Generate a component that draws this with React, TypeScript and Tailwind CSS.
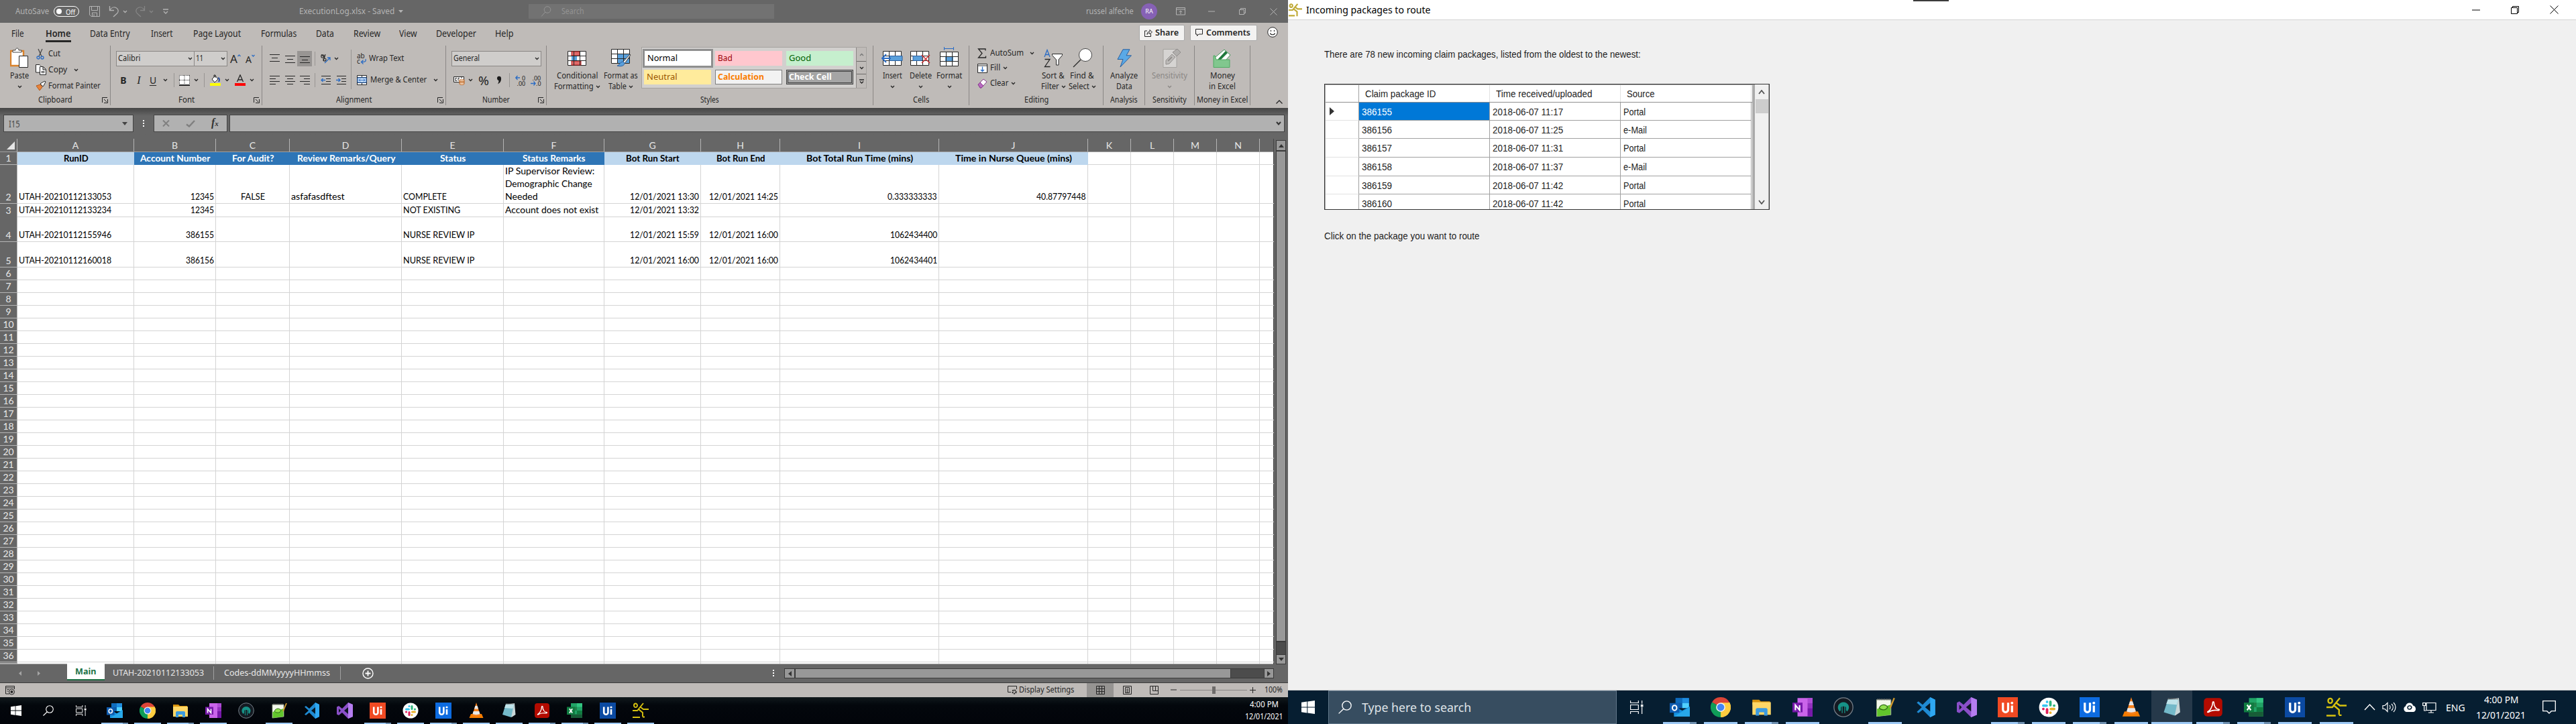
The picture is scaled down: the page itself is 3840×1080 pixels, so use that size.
import { useLayoutEffect, useRef, type ReactNode } from "react";

/** A single line of text condensed or widened to an exact advance width. */
function Fit({ w, children, className = "" }: { w: number; children: string; className?: string }) {
  const ref = useRef<HTMLSpanElement>(null);
  useLayoutEffect(() => {
    const el = ref.current;
    if (!el) return;
    const box = el.parentElement as HTMLElement;
    box.style.width = `${w}px`;
    el.style.transform = `scaleX(${w / el.offsetWidth})`;
  }, [w, children]);
  return (
    <span className={`inline-block shrink-0 whitespace-nowrap ${className}`}>
      <span ref={ref} className="inline-block origin-left">{children}</span>
    </span>
  );
}

function Svg({ w, h, vb, children, className = "" }: { w: number; h: number; vb?: string; children: ReactNode; className?: string }) {
  return (
    <svg width={w} height={h} viewBox={vb ?? `0 0 ${w} ${h}`} fill="none" className={`shrink-0 ${className}`}>
      {children}
    </svg>
  );
}

const Chev = ({ c = "#262626" }: { c?: string }) => (
  <Svg w={7} h={5}><path d="M1 1l2.5 2.5L6 1" stroke={c} strokeWidth="1.3" /></Svg>
);

const Slot = ({ className = "", children }: { className?: string; children?: ReactNode }) => (
  <div className={`flex shrink-0 items-center justify-center ${className}`}>{children}</div>
);

const Sep = () => <div className="h-[21px] w-px bg-[#989593]" />;

/* ---------- Title bar ---------- */
function TitleBar() {
  return (
    <div className="flex h-[34px] items-center bg-[#666666] text-[12.5px] text-[#b4b4b4]">
      <div className="flex w-[80px] pl-[23px]"><Fit w={50}>AutoSave</Fit></div>
      <div className="flex h-[16px] w-[38px] items-center rounded-full border-[1.5px] border-white pl-[3px] text-white">
        <div className="mr-[6px] size-[8px] rounded-full bg-white" />
        <Fit w={14} className="text-[11px] leading-none">Off</Fit>
      </div>
      <Svg w={16} h={16} className="ml-[15px]">
        <path d="M.5.5h15v15H3l-2.500-2.500zM3.500.5v6h9v-6M4.500 15v-5h7v5M7 12v3" stroke="#b4b4b4" />
      </Svg>
      <Svg w={16} h={18} className="ml-[13px]">
        <path d="M1.500 1v6.500H8M1.500 7.500C4 3 8 2 11 3.500c4 2 4 6 1.500 8.500L7 17" stroke="#b4b4b4" strokeWidth="1.300" />
      </Svg>
      <Slot className="ml-1 w-[8px]"><Chev c="#b4b4b4" /></Slot>
      <Svg w={16} h={18} className="ml-[11px]">
        <path d="M14.500 1v6.500H8M14.500 7.500C12 3 8 2 5 3.500c-4 2-4 6-1.500 8.500L9 17" stroke="#868686" strokeWidth="1.300" />
      </Svg>
      <Slot className="ml-1 w-[8px]"><Chev c="#868686" /></Slot>
      <Svg w={8} h={8} className="ml-[14px]"><path d="M0 1h8M1 4l3 3 3-3" stroke="#b4b4b4" strokeWidth="1.300" /></Svg>
      <div className="ml-[195px] flex w-[342px] items-center gap-[6px]">
        <Fit w={142}>ExecutionLog.xlsx - Saved</Fit>
        <Svg w={7} h={4}><path d="M0 0h7L3.500 4z" fill="#b4b4b4" /></Svg>
      </div>
      <div className="flex h-[22px] w-[366px] items-center bg-[#727272] pl-[18px] text-[#949494]">
        <Svg w={16} h={16}><circle cx="10" cy="5.500" r="4.800" stroke="#949494" /><path d="M6.800 9L1 15.500" stroke="#949494" /></Svg>
        <Fit w={34} className="ml-[15px]">Search</Fit>
      </div>
      <div className="ml-[465px] flex"><Fit w={71}>russel alfeche</Fit></div>
      <div className="ml-[11px] flex size-[24px] items-center justify-center rounded-full bg-[#8661b5] text-[9px] text-white">RA</div>
      <Svg w={14} h={12} className="ml-[28px]"><path d="M.5.5h13v10.500H.5zM.5 3h13M7 10V5M4.800 7L7 5l2.200 2" stroke="#b4b4b4" /></Svg>
      <Svg w={10} h={2} className="ml-[34px]"><path d="M0 1h10" stroke="#b4b4b4" /></Svg>
      <Svg w={10} h={10} className="ml-[36px]"><path d="M.5 2.500h7v7h-7zM2.500 2.500v-2h7v7h-2" stroke="#b4b4b4" /></Svg>
      <Svg w={11} h={11} className="ml-[36px]"><path d="M.5.5l10 10M10.500.5l-10 10" stroke="#b4b4b4" /></Svg>
    </div>
  );
}

/* ---------- Ribbon ---------- */
function RibbonTabs() {
  return (
    <div className="flex h-[34px] items-start">
      <div className="grid h-[32px] w-[1698px] grid-cols-[51px_66px_91px_63px_101px_82px_56px_68px_55px_88px_60px] items-center pl-[17px] text-[13.5px]">
        <Fit w={19}>File</Fit>
        <div className="flex h-[24px] w-[38px] translate-y-[1px] items-center border-b-[3px] border-[#262626] pt-[1px]">
          <Fit w={37} className="font-semibold">Home</Fit>
        </div>
        <Fit w={60}>Data Entry</Fit>
        <Fit w={32}>Insert</Fit>
        <Fit w={71}>Page Layout</Fit>
        <Fit w={53}>Formulas</Fit>
        <Fit w={27}>Data</Fit>
        <Fit w={40}>Review</Fit>
        <Fit w={27}>View</Fit>
        <Fit w={60}>Developer</Fit>
        <Fit w={27}>Help</Fit>
      </div>
      <div className="mt-[3px] flex h-[24px] w-[68px] items-center rounded-[2px] border border-[#aaa] bg-[#f3f2f1] pl-[7px] text-[13px] font-semibold">
        <Svg w={12} h={12}><path d="M4 3H.5v8.500h9V8M4 8.500C4 5 6 4 8 4V1.500L11.500 5 8 8V6C6 6 5 6.500 4 8.500z" stroke="#262626" /></Svg>
        <Fit w={35} className="ml-[4px]">Share</Fit>
      </div>
      <div className="mt-[3px] ml-[8px] flex h-[24px] w-[100px] items-center rounded-[2px] border border-[#aaa] bg-[#f3f2f1] pl-[7px] text-[13px] font-semibold">
        <Svg w={11} h={12}><path d="M.5.500h10v7.500H5L2.500 10.500V8h-2z" stroke="#262626" /></Svg>
        <Fit w={66} className="ml-[5px]">Comments</Fit>
      </div>
      <Svg w={16} h={16} className="mt-[6px] ml-[15px]">
        <circle cx="8" cy="8" r="7.300" fill="#fff" stroke="#262626" />
        <path d="M4.500 9.500c1 3 6 3 7 0M5.500 5v2M10.500 5v2" stroke="#262626" strokeWidth="1.200" />
      </Svg>
    </div>
  );
}

function Group({ label, lw, className, dlg, children }: { label: string; lw: number; className: string; dlg?: boolean; children: ReactNode }) {
  return (
    <div className={`flex h-[89px] shrink-0 flex-col border-r border-[#8a8785] ${className}`}>
      <div className="flex h-[75px]">{children}</div>
      <div className="grid h-[16px] grid-cols-[1fr_auto_1fr] items-center text-[12px] leading-none">
        <span />
        <Fit w={lw}>{label}</Fit>
        {dlg ? <Svg w={9} h={9} className="mr-[3px] justify-self-end"><path d="M.5 8V.5H8M3 3l4 4M8.500 3v5.500H3" stroke="#262626" /></Svg> : <span />}
      </div>
    </div>
  );
}

const Line2 = ({ children }: { children: ReactNode }) => <div className="flex h-[16px] items-center justify-center gap-[3px]">{children}</div>;

function Big({ icon, a, aw, b, bw, chev, className, dim }: { icon: ReactNode; a: string; aw: number; b?: string; bw?: number; chev?: boolean; className: string; dim?: boolean }) {
  return (
    <div className={`flex shrink-0 flex-col ${dim ? "text-[#8a8785]" : ""} ${className}`}>
      <div className="flex h-[37px] items-center justify-center">{icon}</div>
      <Line2><Fit w={aw}>{a}</Fit></Line2>
      <Line2>{b && <Fit w={bw ?? 30}>{b}</Fit>}{chev && <Chev c={dim ? "#8a8785" : "#262626"} />}</Line2>
    </div>
  );
}

const Lines = ({ d }: { d: string }) => <Svg w={15} h={15}><path d={d} stroke="#262626" strokeWidth="1.200" /></Svg>;

function Combo({ v, vw, className }: { v: string; vw: number; className: string }) {
  return (
    <div className={`flex h-[23px] items-center justify-between border border-[#8a8785] bg-[#cfcdcb] pr-[2px] pl-[2px] ${className}`}>
      <Fit w={vw}>{v}</Fit><Chev />
    </div>
  );
}

const GridBase = ({ children }: { children?: ReactNode }) => (
  <>
    <path d="M.5.5h27v21H.5z" fill="#fff" stroke="#262626" />
    {children}
    <path d="M.5 7.500h27M.5 14.500h27M9.500.5v21M18.500.5v21" stroke="#262626" />
  </>
);

function Ribbon() {
  return (
    <div className="h-[127px] bg-[#bfbbb8] text-[12.5px] text-[#262626]">
      <RibbonTabs />
      <div className="flex">
        <Group label="Clipboard" lw={51} className="w-[165px]" dlg>
          <Big className="w-[53px] pl-[5px]" a="Paste" aw={28} chev icon={
            <Svg w={28} h={31}>
              <path d="M1 5h19v22H1z" fill="#fff" stroke="#d9822b" strokeWidth="2.400" />
              <path d="M4 7V4h4c0-4 5-4 5 0h4v3z" fill="#fff" stroke="#444" />
              <path d="M13.500 12.500h13v17h-13z" fill="#fff" stroke="#262626" />
            </Svg>} />
          <div className="flex flex-col">
            <div className="flex h-[24px] items-center gap-[4px]">
              <Svg w={15} h={17}><path d="M4 1l5 11M10 1L5 12" stroke="#444" strokeWidth="1.200" /><circle cx="4" cy="14" r="2" stroke="#2b6cc4" strokeWidth="1.300" /><circle cx="10" cy="14" r="2" stroke="#2b6cc4" strokeWidth="1.300" /></Svg>
              <Fit w={18}>Cut</Fit>
            </div>
            <div className="flex h-[24px] items-center gap-[3px]">
              <Svg w={16} h={16}><path d="M6 12H.5V.5H6l2 2" fill="#fff" stroke="#262626" /><path d="M6.500 3.500h5l4 4v8h-9zM11 4v4h4M8.500 10.500h5M8.500 12.500h5" fill="#fff" stroke="#262626" /></Svg>
              <Fit w={28}>Copy</Fit><Slot className="w-[20px]"><Chev /></Slot>
            </div>
            <div className="flex h-[24px] items-center gap-[3px]">
              <Svg w={16} h={16}><path d="M1 8l6-2 3 4-4 5z" fill="#e8833a" stroke="#b45a1c" /><path d="M7 5l4 4 1.500-2L15 2l-1-1-4 2z" fill="#fff" stroke="#262626" /></Svg>
              <Fit w={78}>Format Painter</Fit>
            </div>
          </div>
        </Group>

        <Group label="Font" lw={24} className="w-[226px]" dlg>
          <div className="flex flex-col pt-[8px] pl-[8px]">
            <div className="flex h-[23px] items-center">
              <Combo v="Calibri" vw={33} className="w-[117px]" />
              <Combo v="11" vw={11} className="-ml-px w-[50px]" />
              <Slot className="w-[24px]"><Fit w={11} className="text-[17px] leading-none">A</Fit><Svg w={5} h={14}><path d="M.5 3l2-2 2 2" stroke="#2b6cc4" strokeWidth="1.300" /></Svg></Slot>
              <Slot className="w-[20px]"><Fit w={9} className="mt-[2px] text-[14px] leading-none">A</Fit><Svg w={5} h={14}><path d="M.5 1l2 2 2-2" stroke="#2b6cc4" strokeWidth="1.300" /></Svg></Slot>
            </div>
            <div className="mt-[10px] flex h-[21px] items-center text-[14px]">
              <Slot className="w-[22px] font-bold">B</Slot>
              <Slot className="w-[24px] font-['Liberation_Serif'] text-[16px] italic">I</Slot>
              <Slot className="w-[18px] underline underline-offset-2">U</Slot>
              <Slot className="w-[18px]"><Chev /></Slot>
              <Slot className="w-[8px]"><Sep /></Slot>
              <Slot className="w-[24px]"><Svg w={16} h={16}><path d="M0 0h16v15H0z" fill="#fff" /><path d="M.5 0v15M15.500 0v15M8 0v15M0 .5h16M0 7.500h16" stroke="#262626" strokeDasharray="1 1" /><path d="M0 15h16" stroke="#262626" strokeWidth="2" /></Svg></Slot>
              <Slot className="w-[10px]"><Chev /></Slot>
              <Slot className="w-[14px]"><Sep /></Slot>
              <Slot className="w-[20px]"><Svg w={16} h={17}><path d="M3 7l5-5 4 5-5 5z" fill="#fff" stroke="#262626" /><path d="M6 4V1h2v4" stroke="#262626" /><path d="M12 5c3 1 2 4 1 6" stroke="#2b4f9e" strokeWidth="2" /><path d="M0 13h16v4H0z" fill="#ffff00" /></Svg></Slot>
              <Slot className="w-[14px]"><Chev /></Slot>
              <Slot className="w-[26px]"><Svg w={16} h={17}><path d="M3.500 11L8 .8 12.500 11M5 8h6" stroke="#262626" strokeWidth="1.300" /><path d="M0 13h16v4H0z" fill="#ff0000" /></Svg></Slot>
              <Slot className="w-[9px]"><Chev /></Slot>
            </div>
          </div>
        </Group>

        <Group label="Alignment" lw={53} className="w-[274px]" dlg>
          <div className="flex w-[132px] flex-col pt-[8px] pl-[7px]">
            <div className="flex h-[23px] items-center">
              <Slot className="w-[23px]"><Lines d="M0 1.500h15M3 6.500h9M0 11.500h15" /></Slot>
              <Slot className="w-[22px]"><Lines d="M0 3.500h15M3 8.500h9M0 13.500h15" /></Slot>
              <Slot className="h-[23px] w-[22px] bg-[#989593]"><Lines d="M0 4.500h15M3 9.500h9M0 13.500h15" /></Slot>
              <Slot className="w-[9px]"><Sep /></Slot>
              <Slot className="w-[22px]"><Svg w={17} h={16}><g stroke="#262626" strokeWidth="1.100"><circle cx="4" cy="4" r="2.200" /><path d="M2 1.500l5 4" /><circle cx="8" cy="8" r="2" transform="translate(-1 1)" /><path d="M5 11l3-10" /></g><path d="M7 14l8-8M11 6h4v4" stroke="#2b6cc4" strokeWidth="1.300" /></Svg></Slot>
              <Slot className="w-[10px]"><Chev /></Slot>
            </div>
            <div className="mt-[10px] flex h-[21px] items-center">
              <Slot className="w-[23px]"><Lines d="M0 1.500h15M0 5.500h9M0 9.500h15M0 13.500h9" /></Slot>
              <Slot className="w-[22px]"><Lines d="M0 1.500h15M3 5.500h9M0 9.500h15M3 13.500h9" /></Slot>
              <Slot className="w-[22px]"><Lines d="M0 1.500h15M6 5.500h9M0 9.500h15M6 13.500h9" /></Slot>
              <Slot className="w-[9px]"><Sep /></Slot>
              <Slot className="w-[23px]"><Svg w={15} h={15}><path d="M1 1.500h14M8 5.500h7M8 9.500h7M1 13.500h14" stroke="#262626" strokeWidth="1.200" /><path d="M7 7.500H1M3.500 5L1 7.500 3.500 10" stroke="#2b6cc4" strokeWidth="1.300" /></Svg></Slot>
              <Slot className="w-[22px]"><Svg w={15} h={15}><path d="M1 1.500h14M8 5.500h7M8 9.500h7M1 13.500h14" stroke="#262626" strokeWidth="1.200" /><path d="M0 7.500h6M3.500 5L6 7.500 3.500 10" stroke="#2b6cc4" strokeWidth="1.300" /></Svg></Slot>
            </div>
          </div>
          <div className="mt-[6px] h-[59px] w-px bg-[#989593]" />
          <div className="flex flex-col pt-[8px] pl-[8px]">
            <div className="flex h-[23px] items-center">
              <Svg w={18} h={23} vb="0 -3 18 23"><text x="0" y="8" fontSize="10" fill="#262626">ab</text><text x="0" y="16" fontSize="10" fill="#262626">c</text><path d="M13 9c1 4-1 4.500-6 4.500M9.500 10.500l-3 3 3 3" stroke="#2b6cc4" strokeWidth="1.300" /></Svg>
              <Fit w={52}>Wrap Text</Fit>
            </div>
            <div className="mt-[10px] flex h-[21px] items-center">
              <Svg w={15} h={15} className="mr-[5px]"><path d="M.5.5h14v14H.5zM.5 3.500h14M.5 11.500h14M7.500.5v3M7.500 11.500v3" fill="#fff" stroke="#262626" /><path d="M1 4h13v7H1z" fill="#cfe3f7" stroke="#2b6cc4" /><path d="M3 7.500h9M5 5.500l-2 2 2 2M10 5.500l2 2-2 2" stroke="#2b6cc4" /></Svg>
              <Fit w={84}>Merge & Center</Fit><Slot className="w-[26px]"><Chev /></Slot>
            </div>
          </div>
        </Group>

        <Group label="Number" lw={41} className="w-[150px]" dlg>
          <div className="flex flex-col pt-[8px] pl-[8px]">
            <Combo v="General" vw={39} className="w-[134px]" />
            <div className="mt-[10px] flex h-[21px] items-center">
              <Slot className="w-[22px]"><Svg w={17} h={15}><path d="M.5 2.500h15v8H.5z" fill="#fff" stroke="#262626" /><path d="M5 4.500H3v4h2M9 4.500H7v4M11 4h2" stroke="#262626" /><path d="M9 7h7v6c0 2-7 2-7 0z" fill="#f5d9bf" stroke="#b8601c" /><path d="M9 9.500h7M9 11.500h7" stroke="#b8601c" /></Svg></Slot>
              <Slot className="w-[12px]"><Chev /></Slot>
              <Slot className="w-[28px]"><Fit w={16} className="text-[18px] leading-none">%</Fit></Slot>
              <Slot className="w-[17px]"><Svg w={8} h={13}><path d="M1 4a3 3 0 016-.5C7.500 8 5 11 2 12.500c1-2 1.500-3.500 1.500-5.500C2 7 1 5.500 1 4z" fill="#1a1a1a" /></Svg></Slot>
              <Slot className="w-[14px]"><Sep /></Slot>
              <Slot className="w-[22px]"><Svg w={20} h={24} vb="-1 -4 20 24"><path d="M7 4H.8M3.500 1L.8 4l2.700 3" stroke="#2b6cc4" strokeWidth="1.300" /><text x="10" y="7.500" fontSize="9" fill="#262626">0</text><text x="2.500" y="16" fontSize="9" fill="#262626">.00</text></Svg></Slot>
              <Slot className="w-[24px]"><Svg w={20} h={24} vb="-1 -4 20 24"><path d="M0 12.500h7M4.500 9.500l2.500 3-2.500 3" stroke="#2b6cc4" strokeWidth="1.300" /><text x="2.500" y="7.500" fontSize="9" fill="#262626">.00</text><text x="8" y="16" fontSize="9" fill="#262626">.0</text></Svg></Slot>
            </div>
          </div>
        </Group>

        <Group label="Styles" lw={28} className="w-[487px]">
          <Big className="ml-[10px] w-[70px]" a="Conditional" aw={61} b="Formatting" bw={59} chev icon={
            <Svg w={28} h={22}><GridBase><path d="M6 1h12v6H6zM6 15h14v6H6z" fill="#de6a6a" stroke="#b01e1e" /><path d="M6 8h8v6H6z" fill="#5aa0dc" /></GridBase></Svg>} />
          <Big className="w-[61px]" a="Format as" aw={51} b="Table" bw={27} chev icon={
            <Svg w={30} h={27}><GridBase><path d="M9 8h18v13H9z" fill="#5aa0dc" /></GridBase><path d="M28 8l1 1-9 13-3-2z" fill="#eee" stroke="#444" /><path d="M18 19l2 2c0 4-5 6-11 4 3 0 4-6 9-6z" fill="#5aa0dc" stroke="#2b5f9e" /></Svg>} />
          <div className="mt-[2px] flex h-[62px] w-[336px] border border-[#a5a29f] bg-[#d2d0ce] text-[13px]">
            <div className="grid w-[319px] grid-cols-[106px_106px_106px] grid-rows-[30px_30px]">
              <div className="mt-[2px] ml-px flex h-[28px] items-center border-[3px] border-[#8f8f8f] bg-white pl-[4px] text-black"><Fit w={45}>Normal</Fit></div>
              <div className="mt-[5px] ml-[3px] flex h-[22px] w-[100px] items-center bg-[#ffc7ce] pl-[4px] text-[#9c0006]"><Fit w={22}>Bad</Fit></div>
              <div className="mt-[5px] ml-[3px] flex h-[22px] w-[100px] items-center bg-[#c6efce] pl-[4px] text-[#006100]"><Fit w={33}>Good</Fit></div>
              <div className="mt-[3px] ml-[3px] flex h-[22px] w-[100px] items-center bg-[#ffeb9c] pl-[4px] text-[#9c5700]"><Fit w={46}>Neutral</Fit></div>
              <div className="mt-[3px] ml-[3px] flex h-[22px] w-[100px] items-center border border-[#7f7f7f] bg-[#f2f2f2] pl-[3px] font-bold text-[#fa7d00]"><Fit w={69}>Calculation</Fit></div>
              <div className="mt-[3px] ml-[3px] flex h-[22px] w-[100px] items-center border-[3px] border-double border-[#3f3f3f] bg-[#a5a5a5] pl-[1px] font-bold text-white"><Fit w={64}>Check Cell</Fit></div>
            </div>
            <div className="flex w-[15px] flex-col border-l border-[#8a8785] bg-[#bfbbb8]">
              <Slot className="h-[20px]"><Svg w={7} h={5}><path d="M1 4l2.500-2.500L6 4" stroke="#777" strokeWidth="1.300" /></Svg></Slot>
              <Slot className="h-[20px] border-y border-[#6d6a68]"><Chev /></Slot>
              <Slot className="h-[20px]"><Svg w={7} h={7}><path d="M0 1h7M1 3.500L3.500 6 6 3.500" stroke="#262626" strokeWidth="1.300" /></Svg></Slot>
            </div>
          </div>
        </Group>

        <Group label="Cells" lw={24} className="w-[143px]">
          <Big className="ml-[7px] w-[42px]" a="Insert" aw={29} chev icon={
            <Svg w={32} h={22}><g transform="translate(2 0)"><GridBase /></g><path d="M12 7.500h19v7H12z" fill="#5aa0dc" stroke="#2b5f9e" /><path d="M14 11H1M7 5l-6 6 6 6" stroke="#2b6cc4" strokeWidth="2" /></Svg>} />
          <Big className="w-[42px]" a="Delete" aw={33} chev icon={
            <Svg w={30} h={22}><GridBase /><path d="M4 7.500h13v7H4z" fill="#5aa0dc" stroke="#2b5f9e" /><path d="M17 6l12 12M29 6L17 18" stroke="#d13438" strokeWidth="1.500" /></Svg>} />
          <Big className="w-[44px]" a="Format" aw={38} chev icon={
            <Svg w={28} h={31} className="-mt-[5px]"><path d="M6 3.500h15M6.500 1v5M20.500 1v5" stroke="#2b6cc4" /><g transform="translate(0 8)"><GridBase><path d="M8 8h12v6H8z" fill="#5aa0dc" /></GridBase></g></Svg>} />
        </Group>

        <Group label="Editing" lw={36} className="w-[200px]">
          <div className="ml-[12px] flex w-[92px] flex-col">
            <div className="flex h-[22px] items-center gap-[5px]">
              <Svg w={14} h={15}><path d="M12 3.500V1H1.500l5.500 6.500L1.500 14H12.500v-2.500" stroke="#262626" strokeWidth="1.300" /></Svg>
              <Fit w={50}>AutoSum</Fit><Slot className="w-[14px]"><Chev /></Slot>
            </div>
            <div className="flex h-[23px] items-center gap-[4px]">
              <Svg w={15} h={14}><path d="M.5.500h14v13H.5zM.5 3h14" fill="#fff" stroke="#262626" /><path d="M7.500 4.500v7M5 9l2.500 2.500L10 9" stroke="#2b6cc4" strokeWidth="1.300" /></Svg>
              <Fit w={15}>Fill</Fit><Chev />
            </div>
            <div className="flex h-[23px] items-center gap-[4px]">
              <Svg w={15} h={15}><path d="M1 9L9 1l5 4-8 9H4z" fill="#fff" stroke="#8a3a8f" /><path d="M1 9l3-3 5 5-3 3H4z" fill="#b86bc0" stroke="#8a3a8f" /></Svg>
              <Fit w={27}>Clear</Fit><Chev />
            </div>
          </div>
          <Big className="w-[42px]" a="Sort &" aw={34} b="Filter" bw={27} chev icon={
            <Svg w={28} h={28}><path d="M1 12L5 1.500 9 12M2.500 8.500h5" stroke="#2b6cc4" strokeWidth="1.300" /><path d="M1.500 15.500H9L1.500 26.500H9.500" stroke="#262626" strokeWidth="1.300" /><path d="M12.500 7.500h15v2l-5.500 6.500v8h-3.500v-8l-6-6.500z" fill="#fff" stroke="#262626" /></Svg>} />
          <Big className="w-[44px]" a="Find &" aw={36} b="Select" bw={31} chev icon={
            <Svg w={29} h={29}><circle cx="19" cy="10" r="9.500" fill="#fff" stroke="#444" /><path d="M12 17L1 28" stroke="#262626" strokeWidth="1.300" /></Svg>} />
        </Group>

        <Group label="Analysis" lw={41} className="w-[62px]">
          <Big className="w-full" a="Analyze" aw={41} b="Data" bw={24} icon={
            <Svg w={22} h={28}><path d="M9 .8h10l-5 9h7.500L5 27l4-11.500H1z" fill="#5aa9e6" stroke="#2b5f9e" /></Svg>} />
        </Group>
        <Group label="Sensitivity" lw={51} className="w-[74px]">
          <Big className="w-full" a="Sensitivity" aw={53} chev dim icon={
            <Svg w={28} h={29} className="translate-x-[3px]"><path d="M1 1.500h20v27H1z" fill="#d6d4d2" stroke="#a5a29f" /><path d="M5 18l9-9 5 4-9 10-5 1z" fill="#bdbbb9" stroke="#908d8b" /><path d="M8 19l6-6" stroke="#908d8b" strokeWidth="2" /><path d="M15 6l7-5 5 5-6 6z" fill="#b0aeac" stroke="#908d8b" /></Svg>} />
        </Group>
        <Group label="Money in Excel" lw={76} className="w-[83px]">
          <Big className="w-full" a="Money" aw={37} b="in Excel" bw={40} icon={
            <Svg w={28} h={28}><path d="M3 13L17 1l9 8-7 8H3z" fill="#fff" stroke="#3f9a58" /><path d="M6 17L19 3l3 3-11 11z" fill="#1f7a3d" /><path d="M1 10h2l2 6h20v11.500H1z" fill="#81c78e" stroke="#4faa63" /></Svg>} />
        </Group>
        <div className="flex flex-1 items-end justify-end pr-[8px]"><Svg w={10} h={6} className="mb-[2px]"><path d="M.5 5.500L5 1l4.500 4.500" stroke="#262626" strokeWidth="1.300" /></Svg></div>
      </div>
    </div>
  );
}

function FormulaBar() {
  return (
    <div className="flex h-[46px] items-start bg-[#666666] bg-linear-to-b from-[#454545] via-[#666666] via-[12px] to-[#666666] to-[12px] pt-[10px] text-[14px]">
      <div className="ml-[5px] flex h-[26px] w-[194px] items-center justify-between border border-[#444] bg-[#b1b1b1] pr-[8px] pl-[7px] text-[#4a4a4a]">
        <Fit w={17}>I15</Fit><Svg w={8} h={5}><path d="M0 0h8L4 5z" fill="#444" /></Svg>
      </div>
      <div className="flex h-[26px] w-[30px] flex-col items-center justify-center gap-[2px]">
        <i className="size-[2px] bg-white" /><i className="size-[2px] bg-white" /><i className="size-[2px] bg-white" />
      </div>
      <div className="flex h-[26px] w-[110px] items-center border border-[#444] bg-[#b1b1b1]">
        <Svg w={11} h={10} className="ml-[12px]"><path d="M1 .5l9 9M10 .5l-9 9" stroke="#808080" strokeWidth="2" /></Svg>
        <Svg w={14} h={11} className="ml-[24px]"><path d="M1 6.500l4 3L13 1" stroke="#808080" strokeWidth="2.500" /></Svg>
        <span className="ml-[24px] pb-[3px] font-['Liberation_Serif'] text-[16px] leading-none font-bold text-[#333] italic">f<span className="text-[11px]">x</span></span>
      </div>
      <div className="ml-[3px] flex h-[26px] w-[1573px] items-center justify-end border border-[#444] bg-[#b1b1b1] pr-[4px]">
        <Svg w={8} h={6}><path d="M1 1l3 3.500L7 1" stroke="#333" strokeWidth="2" /></Svg>
      </div>
    </div>
  );
}

/* ---------- Worksheet ---------- */
const COLS = "grid grid-cols-[26px_174px_122px_110px_167px_152px_150px_144px_118px_237px_222px_64px_64px_64px_64px_21px]";
const LETTERS = ["A", "B", "C", "D", "E", "F", "G", "H", "I", "J", "K", "L", "M", "N", ""];
type Cell = [string, number, ("l" | "r" | "c")?];
const HEAD: Cell[] = [["RunID", 37], ["Account Number", 104], ["For Audit?", 63], ["Review Remarks/Query", 146], ["Status", 38], ["Status Remarks", 94], ["Bot Run Start", 80], ["Bot Run End", 73], ["Bot Total Run Time (mins)", 159], ["Time in Nurse Queue (mins)", 174]];
const DATA: Record<number, Record<number, Cell>> = {
  2: { 0: ["UTAH-20210112133053", 138], 1: ["12345", 35, "r"], 2: ["FALSE", 36, "c"], 3: ["asfafasdftest", 80], 4: ["COMPLETE", 65], 6: ["12/01/2021 13:30", 103, "r"], 7: ["12/01/2021 14:25", 103, "r"], 8: ["0.333333333", 74, "r"], 9: ["40.87797448", 74, "r"] },
  3: { 0: ["UTAH-20210112133234", 138], 1: ["12345", 35, "r"], 4: ["NOT EXISTING", 85], 5: ["Account does not exist", 139], 6: ["12/01/2021 13:32", 103, "r"] },
  4: { 0: ["UTAH-20210112155946", 138], 1: ["386155", 42, "r"], 4: ["NURSE REVIEW IP", 106], 6: ["12/01/2021 15:59", 103, "r"], 7: ["12/01/2021 16:00", 103, "r"], 8: ["1062434400", 70, "r"] },
  5: { 0: ["UTAH-20210112160018", 138], 1: ["386156", 42, "r"], 4: ["NURSE REVIEW IP", 106], 6: ["12/01/2021 16:00", 103, "r"], 7: ["12/01/2021 16:00", 103, "r"], 8: ["1062434401", 70, "r"] },
};
const rowHeight = (r: number) => (r === 2 ? "h-[58px]" : r === 4 || r === 5 ? "h-[38px]" : r === 37 ? "h-[2px]" : "h-[19px]");
const alignOf = { l: "justify-start", r: "justify-end", c: "justify-center" };

function Sheet() {
  return (
    <div className="flex h-[784px] bg-[#666666]">
      <div className="w-[1899px] border-r border-[#444] font-['Lato'] text-[13.5px] leading-[19px] text-black">
        <div className={`${COLS} h-[20px] border-b border-[#a0a0a0] text-[#e6e6e6]`}>
          <div className="flex items-end justify-end border-r border-[#b5b5b5] pr-[3px] pb-[3px]"><Svg w={12} h={12}><path d="M12 0v12H0z" fill="#e6e6e6" /></Svg></div>
          {LETTERS.map((l, i) => <div key={i} className={`text-center text-[14px] ${i < 14 ? "border-r border-[#b5b5b5]" : ""}`}>{l}</div>)}
        </div>
        {Array.from({ length: 37 }, (_, k) => k + 1).map((r) => (
          <div key={r} className={`${COLS} ${rowHeight(r)} bg-white`}>
            <div className="flex items-end justify-center overflow-hidden border-r border-b border-[#b5b5b5] bg-[#666666] text-[14px] leading-[18px] text-[#e6e6e6]">{r < 37 && r}</div>
            {LETTERS.map((_, c) => {
              if (r === 1 && c < 10) {
                const blue = c > 0 && c < 6;
                return <div key={c} className={`flex justify-center font-bold ${blue ? "bg-[#2e75b6] text-white" : "bg-[#bdd7ee]"}`}><Fit w={HEAD[c][1]}>{HEAD[c][0]}</Fit></div>;
              }
              if (r === 2 && c === 5) {
                return (
                  <div key={c} className="flex flex-col items-start border-r border-b border-[#d4d4d4] pl-[2px]">
                    <Fit w={133}>IP Supervisor Review:</Fit><Fit w={130}>Demographic Change</Fit><Fit w={49}>Needed</Fit>
                  </div>
                );
              }
              const d = DATA[r]?.[c];
              return (
                <div key={c} className={`flex items-end border-[#d4d4d4] px-[2px] ${c < 14 ? "border-r" : ""} ${r < 37 ? "border-b" : ""} ${alignOf[d?.[2] ?? "l"]}`}>
                  {d && <Fit w={d[1]}>{d[0]}</Fit>}
                </div>
              );
            })}
          </div>
        ))}
        <div className="h-px bg-[#a0a0a0]" />
      </div>
      <div className="ml-[3px] mt-[2px] flex h-[782px] w-[15px] flex-col border border-[#3a3a3a] bg-[#4c4c4c]">
        <Slot className="h-[14px] bg-[#989898]"><Svg w={8} h={5}><path d="M0 5h8L4 0z" fill="#333" /></Svg></Slot>
        <div className="h-[734px] border-y-2 border-[#3a3a3a] bg-[#989898]" />
        <div className="flex-1" />
        <Slot className="h-[14px] border-t border-[#3a3a3a] bg-[#989898]"><Svg w={8} h={5}><path d="M0 0h8L4 5z" fill="#333" /></Svg></Slot>
      </div>
    </div>
  );
}

function SheetTabs() {
  return (
    <div className="flex h-[28px] items-start border-b border-[#3c3c3c] bg-[#666666] text-[13px] text-[#e6e6e6]">
      <Slot className="h-[26px] w-[60px]"><Svg w={4} h={7}><path d="M4 0v7L0 3.500z" fill="#a5a5a5" /></Svg></Slot>
      <Slot className="-ml-[4px] h-[26px] w-[4px]"><Svg w={4} h={7}><path d="M0 0v7l4-3.500z" fill="#a5a5a5" /></Svg></Slot>
      <div className="-mt-px ml-[40px] flex h-[25px] w-[56px] items-center justify-center border-b-2 border-[#217346] bg-white pr-px font-bold text-[#217346]"><Fit w={31}>Main</Fit></div>
      <div className="mt-[3px] flex h-[20px] w-[163px] items-center border-r border-[#a0a0a0] pl-[12px]"><Fit w={136}>UTAH-20210112133053</Fit></div>
      <div className="mt-[3px] flex h-[20px] w-[189px] items-center border-r border-[#a0a0a0] pl-[15px]"><Fit w={158}>Codes-ddMMyyyyHHmmss</Fit></div>
      <Svg w={17} h={17} className="mt-[5px] ml-[32px]"><circle cx="8.500" cy="8.500" r="7.500" stroke="#fff" strokeWidth="1.400" /><path d="M4.500 8.500h8M8.500 4.500v8" stroke="#fff" strokeWidth="1.800" /></Svg>
      <div className="mt-[8px] ml-[595px] flex w-[2px] flex-col gap-[2px]"><i className="size-[2px] bg-white" /><i className="size-[2px] bg-white" /><i className="size-[2px] bg-white" /></div>
      <div className="mt-[6px] ml-[15px] flex h-[15px] w-[730px] border border-[#3a3a3a] bg-[#4c4c4c]">
        <Slot className="w-[14px] bg-[#989898]"><Svg w={5} h={8}><path d="M5 0v8L0 4z" fill="#333" /></Svg></Slot>
        <div className="w-[651px] border-r border-l-2 border-[#3a3a3a] bg-[#989898]" />
        <div className="flex-1" />
        <Slot className="w-[14px] border-l border-[#3a3a3a] bg-[#989898]"><Svg w={5} h={8}><path d="M0 0v8l5-4z" fill="#333" /></Svg></Slot>
      </div>
    </div>
  );
}

function StatusBar() {
  return (
    <div className="flex h-[21px] items-center bg-[#bfbbb8] text-[12.5px] text-[#262626]">
      <Svg w={15} h={14} className="ml-[8px]"><path d="M6 12H.5V.5h13V5M.5 3h13M2.500 5.500h3M2.500 8h2" stroke="#262626" /><circle cx="9.500" cy="9" r="4" stroke="#262626" /><circle cx="9.500" cy="9" r="2" fill="#262626" /></Svg>
      <Svg w={15} h={14} className="ml-[1479px]"><path d="M5 9.500H.5V.5h13V5" stroke="#262626" /><circle cx="10" cy="9" r="2.600" stroke="#262626" strokeWidth="2" strokeDasharray="2 1" /></Svg>
      <Fit w={82} className="ml-[2px]">Display Settings</Fit>
      <Slot className="ml-[19px] h-[21px] w-[40px] bg-[#969492]"><Svg w={13} h={13}><path d="M.5.500h12v12H.5zM.5 4.500h12M.5 8.500h12M4.500.5v12M8.500.5v12" stroke="#262626" /></Svg></Slot>
      <Slot className="w-[40px]"><Svg w={13} h={13}><path d="M.5.500h12v12H.5zM3.500 2.500h6v8h-6zM5 5h3M5 7h3M5 9h3" stroke="#262626" /></Svg></Slot>
      <Slot className="w-[40px]"><Svg w={13} h={13}><path d="M.5.500h12v12H.5zM4.500.5v7M8.500.5v7h-4M12.500 7.500h-4" stroke="#262626" /></Svg></Slot>
      <Svg w={9} h={9} className="ml-[5px]"><path d="M0 4h9" stroke="#262626" /></Svg>
      <div className="ml-[5px] flex h-[11px] w-[100px] items-center"><div className="h-px w-[48px] bg-[#8a8785]" /><div className="h-[11px] w-[5px] bg-[#6e6c6a]" /><div className="h-px flex-1 bg-[#8a8785]" /></div>
      <Svg w={9} h={9} className="ml-[4px]"><path d="M0 4.500h9M4.500 0v9" stroke="#262626" /></Svg>
      <Fit w={27} className="ml-[13px]">100%</Fit>
    </div>
  );
}

/* ---------- Taskbar icons, all on a 24-unit canvas ---------- */
const Ui = ({ bg }: { bg: string }) => (<><path d="M0 0h24v24H0z" fill={bg} /><path d="M6.200 6.500v8.200a3.100 3.100 0 006.200 0V6.500M17 10v8" stroke="#fff" strokeWidth="2.600" /><circle cx="17" cy="7" r="1.600" fill="#fff" /></>);
const ICONS: Record<string, ReactNode> = {
  outlook: (<><path d="M7 1h16v12H7z" fill="#0a5aa8" /><path d="M7 1h8v6H7z" fill="#0f6cbd" /><path d="M15 1h8v6h-8z" fill="#1f8ee0" /><path d="M15 7h8v6h-8z" fill="#50d0ff" /><path d="M5 11l10 5 9-5v12H5z" fill="#1490df" /><path d="M5 23l19-11v11z" fill="#28a8ea" /><path d="M0 7h11.500v11.500H0z" fill="#0f5cb0" /><ellipse cx="5.800" cy="12.700" rx="2.600" ry="3" stroke="#fff" strokeWidth="1.600" /></>),
  chrome: (<><path d="M12 12L1.600 6A12 12 0 0122.400 6z" fill="#db4437" /><path d="M12 12l10.400-6A12 12 0 0112 24z" fill="#ffcd40" /><path d="M12 12v12A12 12 0 011.600 6z" fill="#0f9d58" /><path d="M12 6.500h10.600A12 12 0 0112 24l5-9z" fill="#ffcd40" /><circle cx="12" cy="12" r="5.500" fill="#f1f1f1" /><circle cx="12" cy="12" r="4.300" fill="#4285f4" /></>),
  folder: (<><path d="M1 3h8l2 2h11v4H1z" fill="#d9930d" /><path d="M1 6h22v15H1z" fill="#ffd767" /><path d="M5 22v-7a2 2 0 012-2h10a2 2 0 012 2v7h-4v-4H9v4z" fill="#3c9be0" /></>),
  onenote: (<><path d="M6 1h18v22H6z" fill="#ca64ea" /><path d="M18 1h6v6h-6z" fill="#ae4bd5" /><path d="M18 7h6v6h-6z" fill="#9332bf" /><path d="M18 13h6v10h-6z" fill="#7719aa" /><path d="M0 6.500h12v11.500H0z" fill="#7719aa" /><path d="M3.500 15.500v-6l5 6v-6" stroke="#fff" strokeWidth="1.700" /></>),
  kraken: (<><circle cx="12" cy="12" r="11.300" fill="#141a22" stroke="#77808a" /><path d="M7.500 17c-4.500-5-1-11 4.500-11s9 6 4.500 11l-1.500-1.500V12l-1-1v8h-1v-8h-2v8h-1v-8l-1 1v3.500z" fill="#169287" /></>),
  npp: (<><path d="M2 3h17v18l-17 2z" fill="#f2f7ec" stroke="#97a58b" strokeWidth=".8" /><path d="M3 2.500h15" stroke="#666" strokeWidth="2" strokeDasharray="1 1" /><path d="M2.500 14l16-5v12l-16 2z" fill="#62c52c" /><path d="M5 13c2-5 8-5 10-1-2 4-7 4-10 1z" fill="#8fe04e" stroke="#2f6b16" /><path d="M23 1l-5 12" stroke="#d39a2c" strokeWidth="1.800" /></>),
  vscode: (<><path d="M17 0l6 3v18l-6 3-9-9-5 4-2-1.500L7 12 1 6.500 3 5l5 4z" fill="#1f8ad2" /><path d="M17 0l6 3v18l-6 3z" fill="#2fa8f2" /><path d="M17 7v10l-6-5z" fill="#061724" /></>),
  vs: (<><path d="M17 0l7 3v18l-7 3-9-9-5 4-3-1.500v-11L3 5l5 4z" fill="#8a4fc8" /><path d="M17 0l7 3v18l-7 3z" fill="#b57df0" /><path d="M17 7v10l-6-5zM3 9v6l3-3z" fill="#0c1622" /></>),
  uired: <Ui bg="#f04a23" />,
  slack: (<><circle cx="12" cy="12" r="11.500" fill="#fff" /><g strokeWidth="3" strokeLinecap="round"><path d="M5.500 10h4" stroke="#36c5f0" /><path d="M10 5.500v.1" stroke="#36c5f0" /><path d="M14 5.500v4" stroke="#2eb67d" /><path d="M18.500 10h-.1" stroke="#2eb67d" /><path d="M14.500 14h4" stroke="#ecb22e" /><path d="M14 18.500v-.1" stroke="#ecb22e" /><path d="M10 14.500v4" stroke="#e01e5a" /><path d="M5.500 14h.1" stroke="#e01e5a" /></g></>),
  uiblue: <Ui bg="#0d6be0" />,
  vlc: (<><path d="M4 17h16l2.500 6h-21z" fill="#f57c00" /><path d="M12 0l6 19c-3 2-9 2-12 0z" fill="#f7811c" /><path d="M10.400 5h3.200l1.500 4.500H9zM7.700 13h8.600l1.200 4c-3 1.500-8 1.500-11 0z" fill="#e9e9e9" /></>),
  notepad: (<><path d="M7 3l13-2 1.500 17-6 4z" fill="#c9d6d8" /><path d="M7 2.500l12 .5-4 19L2 18z" fill="#74b9c9" /><path d="M7 2.500l12 .5-1.500 6L5 8z" fill="#bfe3ea" /><path d="M7 2h12" stroke="#777" strokeWidth="1.500" strokeDasharray="1 .8" /></>),
  acrobat: (<><rect x="1" y="1" width="22" height="22" rx="4" fill="#b30b00" /><path d="M5.500 17.500c3-1 6-7 6-11 0-1.500 1.500-1.500 1.500 0 0 4 2.500 8 5.500 8 1.500 0 1 1.500-.5 1.300-4-.6-7-.3-10 1.200-1.500 1-3 1.500-2.500.5z" stroke="#fff" strokeWidth="1.300" /></>),
  excel: (<><path d="M6 1h17v22H6z" fill="#21a366" /><path d="M15 1h8v5.500h-8z" fill="#33c481" /><path d="M6 6.500h9V12H6z" fill="#21804a" /><path d="M15 12h8v5.500h-8z" fill="#107c41" /><path d="M6 17.500h17V23H6z" fill="#185c37" /><path d="M0 6.500h12V18H0z" fill="#107c41" /><path d="M3.800 9.200l4.400 6.300M8.200 9.200l-4.400 6.300" stroke="#fff" strokeWidth="1.800" /></>),
  uinavy: <Ui bg="#0b4aa2" />,
  runner: <path d="M4.500 1.500a2.500 2.800 0 100 5.600 2.500 2.800 0 100-5.600M16 1L7 12H0M9 10l6 5v6M12 7l4 3h8M0 22h11M15 21.500h3" stroke="#d8c20f" strokeWidth="1.900" />,
};
const ORDER = ["outlook", "chrome", "folder", "onenote", "kraken", "npp", "vscode", "vs", "uired", "slack", "uiblue", "vlc", "notepad", "acrobat", "excel", "uinavy", "runner"];
const IDLE = ["kraken", "vscode", "vs"];
const STACKED = ["outlook", "folder", "uired", "uiblue", "acrobat", "excel"];
const WinLogo = ({ s }: { s: number }) => <Svg w={s} h={s} vb="0 0 20 20"><path d="M0 2.800L8.300 1.600v7.900H0zM9.300 1.500L20 0v9.500H9.300zM0 10.500h8.300v7.900L0 17.200zM9.300 10.500H20V20L9.300 18.500z" fill="#fff" /></Svg>;
const Mag = ({ s }: { s: number }) => <Svg w={s} h={s} vb="0 0 16 16"><circle cx="10" cy="6" r="5.300" stroke="#fff" strokeWidth="1.100" /><path d="M6.200 10L.5 15.500" stroke="#fff" strokeWidth="1.100" /></Svg>;
const TaskView = ({ s }: { s: number }) => <Svg w={s} h={s} vb="0 0 17 17"><path d="M.5 0v3h10V0M.5 5.500h10v6H.5zM.5 17v-3h10v3M15 0v4M15 8.500V17" stroke="#fff" /><path d="M13.500 5h3v3h-3z" fill="#fff" /></Svg>;

function LeftTaskbar() {
  return (
    <div className="flex h-[40px] bg-[#03070c] bg-linear-to-b from-[#12191c] via-[#03070c] via-[12px] to-[#02040a] text-[12.5px] text-white">
      <Slot className="w-[48px]"><WinLogo s={16} /></Slot>
      <Slot className="w-[48px]"><Mag s={16} /></Slot>
      <Slot className="w-[50.500px]"><TaskView s={16} /></Slot>
      {ORDER.map((n) => (
        <div key={n} className="flex w-[49px] shrink-0 flex-col items-center justify-between pt-[8px]">
          <Svg w={24} h={24}>{ICONS[n]}</Svg>
          {IDLE.includes(n) ? <div /> : <div className="flex h-[2px] w-[40px] bg-[#9dc9f5]">{STACKED.includes(n) && <div className="ml-auto w-[8px] bg-[#6f90b0]" />}</div>}
        </div>
      ))}
      <div className="ml-auto flex w-[71px] flex-col items-center pt-[2px] leading-[18px]">
        <Fit w={43}>4:00 PM</Fit><Fit w={57}>12/01/2021</Fit>
      </div>
    </div>
  );
}

function RightTaskbar() {
  return (
    <div className="flex h-[50px] bg-[#061e31] text-[15px] text-white">
      <Slot className="w-[60px]"><WinLogo s={20} /></Slot>
      <div className="flex h-[50px] w-[430px] items-center border border-[#62788a] bg-[#374d60] pl-[14px]">
        <Mag s={20} /><Fit w={163} className="ml-[15px] text-[18.5px] text-[#dfe3e7]">Type here to search</Fit>
      </div>
      <Slot className="w-[60px]"><TaskView s={20} /></Slot>
      <div className="ml-[3px] flex">
        {ORDER.map((n) => (
          <div key={n} className={`flex w-[61.200px] shrink-0 flex-col items-center justify-between pt-[10px] ${n === "notepad" ? "bg-[#26394a]" : ""}`}>
            <Svg w={30} h={30} vb="0 0 24 24">{ICONS[n]}</Svg>
            {IDLE.includes(n) ? <div /> : <div className={`flex h-[3px] bg-[#9dc9f5] ${n === "notepad" ? "w-full" : "w-[50px]"}`}>{STACKED.includes(n) && <div className="ml-auto w-[10px] bg-[#6f90b0]" />}</div>}
          </div>
        ))}
      </div>
      <div className="ml-[11px] flex items-center">
        <Svg w={17} h={10}><path d="M1 9l7.500-8L16 9" stroke="#fff" strokeWidth="1.400" /></Svg>
        <Svg w={22} h={18} className="ml-[10px]"><path d="M1 6.500h3l4-4v13l-4-4H1zM11 6c1.500 2 1.500 4 0 6M14 4c3 3 3 7 0 10M17 2c4 4 4 10 0 14" stroke="#fff" strokeWidth="1.200" /></Svg>
        <Svg w={20} h={16} className="ml-[9px]"><path d="M5 15a4.500 4.500 0 01-1-8.500C5 0 14 0 15 5.500A5 5 0 0116 15z" fill="#fff" /><path d="M7 9c0-4 5-4 6-1M13 7c0 5-5 5-6 2" stroke="#061e31" strokeWidth="1.500" /></Svg>
        <Svg w={21} h={17} className="ml-[9px]"><path d="M6 1.500h14v11H6zM9 16h8M13 12.500V16M.7 1.500h4v4h-4zM2.700 5.500V13h3" stroke="#fff" strokeWidth="1.200" /></Svg>
        <Fit w={29} className="ml-[14px]">ENG</Fit>
      </div>
      <div className="ml-[14px] flex w-[78px] flex-col items-center pt-[2px] leading-[23px]"><Fit w={51}>4:00 PM</Fit><Fit w={74}>12/01/2021</Fit></div>
      <Slot className="w-[66px]"><Svg w={20} h={20}><path d="M.7.700h18.600v15h-6L10 19l-3.300-3.300h-6z" stroke="#fff" strokeWidth="1.300" /></Svg></Slot>
    </div>
  );
}

/* ---------- Routing window ---------- */
const PACKAGES = [
  ["386155", "2018-06-07 11:17", "Portal", "h-[27px]"],
  ["386156", "2018-06-07 11:25", "e-Mail", "h-[27px]"],
  ["386157", "2018-06-07 11:31", "Portal", "h-[28px]"],
  ["386158", "2018-06-07 11:37", "e-Mail", "h-[28px]"],
  ["386159", "2018-06-07 11:42", "Portal", "h-[27px]"],
  ["386160", "2018-06-07 11:42", "Portal", "h-[28px]"],
];
const PCOLS = "grid grid-cols-[50px_195px_195px_195px]";

function RoutingWindow() {
  return (
    <div className="flex h-[1080px] w-[1920px] flex-col bg-[#f0f0f0] text-black">
      <div className="flex h-[30px] items-center border-b border-[#d4d4d4] bg-white text-[15px]">
        <Svg w={20} h={20} vb="0 0 24 24" className="ml-px"><path d="M4.500 1.500a2.500 2.800 0 100 5.600 2.500 2.800 0 100-5.600M16 1L7 12H0M9 10l6 5v8M12 7l4 3h8M0 22h11" stroke="#c0ab38" strokeWidth="2.600" /></Svg>
        <Fit w={185} className="ml-[6px]">Incoming packages to route</Fit>
        <div className="ml-[711px] h-[30px] w-[64px]"><div className="ml-[9px] h-[2px] w-[53px] bg-[#3c3c3c]" /></div>
        <div className="ml-auto flex items-center">
          <Svg w={12} h={2}><path d="M0 1h12" stroke="#000" /></Svg>
          <Svg w={12} h={12} className="ml-[46px]"><path d="M.5 2.500h9v9h-9zM2.500 2.500v-2h9v9h-2" stroke="#000" /></Svg>
          <Svg w={13} h={13} className="mr-[26px] ml-[46px]"><path d="M.5.5l12 12M12.500.5l-12 12" stroke="#000" /></Svg>
        </div>
      </div>
      <div className="flex h-[1000px] flex-col items-start border-b border-[#d0d0d0] pl-[54px] font-['Liberation_Sans'] text-[15px] text-[#1c1c1c]">
        <div className="mt-[41px] flex h-[20px] items-center"><Fit w={472}>There are 78 new incoming claim packages, listed from the oldest to the newest:</Fit></div>
        <div className="mt-[34px] flex h-[188px] w-[664px] overflow-hidden border border-[#333] bg-[#ababab] pt-px pl-px">
          <div className="w-[636px]">
            <div className={`${PCOLS} h-[26px] border-b border-[#8f8f8f] bg-white`}>
              <div className="border-r border-[#a0a0a0]" />
              {([["Claim package ID", 105], ["Time received/uploaded", 144], ["Source", 42]] as [string, number][]).map(([t, w]) => (
                <div key={t} className="flex items-center border-r border-[#e2e2e2] pt-px pl-[9px]"><Fit w={w}>{t}</Fit></div>
              ))}
            </div>
            {PACKAGES.map(([id, time, src, h], i) => (
              <div key={id} className={`${PCOLS} ${h} bg-white leading-[22px]`}>
                <div className="flex items-center border-r border-b border-r-[#a0a0a0] border-b-[#e2e2e2] pl-[6px]">{i === 0 && <Svg w={7} h={12}><path d="M0 0l7 6-7 6z" fill="#333" /></Svg>}</div>
                <div className={`flex items-center border-r border-b border-[#a0a0a0] pt-px pl-[4px] ${i === 0 ? "bg-[#0078d7] text-white" : ""}`}><Fit w={45}>{id}</Fit></div>
                <div className="flex items-center border-r border-b border-[#a0a0a0] pt-px pl-[4px]"><Fit w={105}>{time}</Fit></div>
                <div className="flex items-center border-r border-b border-[#a0a0a0] pt-px pl-[4px]"><Fit w={src === "Portal" ? 33 : 35}>{src}</Fit></div>
              </div>
            ))}
          </div>
          <div className="-mt-px ml-[4px] flex w-[20px] flex-col items-center bg-[#f0f0f0]">
            <Slot className="h-[22px]"><Svg w={10} h={7}><path d="M1 6l4-5 4 5" stroke="#555" strokeWidth="1.800" /></Svg></Slot>
            <div className="h-[21px] w-[19px] bg-[#cdcdcd]" />
            <Slot className="mt-auto h-[22px]"><Svg w={10} h={7}><path d="M1 1l4 5 4-5" stroke="#555" strokeWidth="1.800" /></Svg></Slot>
          </div>
        </div>
        <div className="mt-[29px] flex h-[20px] items-center"><Fit w={232}>Click on the package you want to route</Fit></div>
      </div>
      <RightTaskbar />
    </div>
  );
}

export default function App() {
  return (
    <div className="flex h-[1080px] w-[3840px] overflow-hidden font-['Noto_Sans','Open_Sans',sans-serif]">
      <div className="flex w-[1920px] flex-col">
        <TitleBar />
        <Ribbon />
        <FormulaBar />
        <Sheet />
        <SheetTabs />
        <StatusBar />
        <LeftTaskbar />
      </div>
      <RoutingWindow />
    </div>
  );
}
